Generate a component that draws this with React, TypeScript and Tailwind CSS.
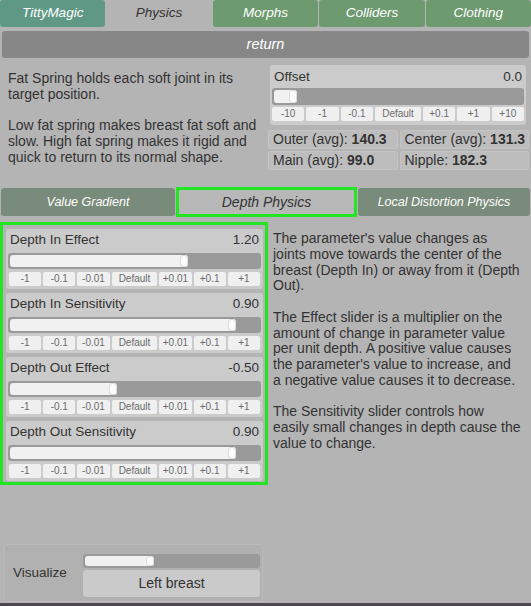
import React from "react";

const FONT = { fontFamily: '"Liberation Sans", Arial, sans-serif' };

function Slider({ pct, h = 16 }: { pct: number; h?: number }) {
  return (
    <div
      className="bg-[#9a9a9a] rounded-[3px] px-[2px] py-[2px] flex"
      style={{ height: h }}
    >
      <div className="h-full flex justify-end rounded-[3px] bg-[#f1f1f1]" style={{ width: `${pct}%` }}>
        <div className="h-full w-[8px] rounded-[3px] bg-[#fbfbfb] border border-[#dcdcdc]" />
      </div>
    </div>
  );
}

function Buttons({ labels }: { labels: string[] }) {
  return (
    <div className="flex gap-[2px] h-[14px]">
      {labels.map((l) => (
        <div
          key={l}
          className={`${l === "Default" ? "flex-[1.42]" : "flex-1"} bg-[#f0f0f0] rounded-[2px] flex items-center justify-center text-[10px] text-[#6b6b6b] leading-none`}
        >
          {l}
        </div>
      ))}
    </div>
  );
}

function DepthPanel({ label, value, pct }: { label: string; value: string; pct: number }) {
  return (
    <div className="h-[60px] bg-[#cbcbcb] rounded-[3px] px-[2px] flex flex-col">
      <div className="h-[22px] flex items-center justify-between px-[2px] text-[13.5px] text-[#333] pt-[1px]">
        <span>{label}</span>
        <span>{value}</span>
      </div>
      <div className="mt-[2px]">
        <Slider pct={pct} />
      </div>
      <div className="mt-[3px] px-[1px]">
        <Buttons labels={["-1", "-0.1", "-0.01", "Default", "+0.01", "+0.1", "+1"]} />
      </div>
    </div>
  );
}

export default function App() {
  const tabs = ["TittyMagic", "Physics", "Morphs", "Colliders", "Clothing"];
  return (
    <div className="w-[531px] h-[606px] bg-[#b4b4b4] flex flex-col overflow-hidden" style={FONT}>
      {/* top tabs */}
      <div className="flex gap-[1px] h-[27px]">
        {tabs.map((t, i) => (
          <div
            key={t}
            className={`flex-1 rounded-[3px] flex items-center justify-center italic text-[13.5px] ${
              i === 1
                ? "bg-[#b4b4b4] text-[#333]"
                : i === 0
                ? "bg-[#5f9985] text-white"
                : "bg-[#6e9a70] text-white"
            }`}
          >
            {t}
          </div>
        ))}
      </div>
      {/* return bar */}
      <div className="mt-[4px] mx-[2px] h-[27px] rounded-[3px] bg-[#878787] flex items-center justify-center italic text-white text-[14.5px]">
        return
      </div>

      {/* top section */}
      <div className="flex mt-[7px]">
        <div className="w-[262px] pl-[8px] pt-[6px] text-[14px] leading-[15.75px] text-[#333]">
          <div className="w-[256px]">
            <p>Fat Spring holds each soft joint in its target position.</p>
            <p className="mt-[15.75px]">
              Low fat spring makes breast fat soft and slow. High fat spring makes it rigid and quick to return to its
              normal shape.
            </p>
          </div>
        </div>
        <div className="flex flex-col w-[261px] ml-[6px]">
          <div className="ml-[2px] mr-[3px] h-[60px] bg-[#cbcbcb] rounded-[3px] px-[2px] flex flex-col">
            <div className="h-[23px] flex items-center justify-between px-[2px] text-[13.5px] text-[#333] pt-[1px]">
              <span>Offset</span>
              <span>0.0</span>
            </div>
            <Slider pct={9.3} h={17} />
            <div className="mt-[2px]">
              <Buttons labels={["-10", "-1", "-0.1", "Default", "+0.1", "+1", "+10"]} />
            </div>
          </div>
          <div className="mt-[5px] grid grid-cols-2 gap-[2px] text-[14px] text-[#333]">
            {[
              ["Outer (avg):", "140.3"],
              ["Center (avg):", "131.3"],
              ["Main (avg):", "99.0"],
              ["Nipple:", "182.3"],
            ].map(([a, b]) => (
              <div key={a} className="h-[19px] bg-[#bdbdbd] border border-[#c4c4c4] rounded-[2px] flex items-center pl-[4px] whitespace-pre">
                <span>{a} </span>
                <span className="font-bold">{b}</span>
              </div>
            ))}
          </div>
        </div>
      </div>

      {/* sub tabs */}
      <div className="flex mt-[17px] h-[30px]">
        <div className="w-[174px] ml-[1px] my-[1px] rounded-[3px] bg-[#798b7a] flex items-center justify-center italic text-white text-[12.5px]">
          Value Gradient
        </div>
        <div className="w-[181px] ml-[1px] border-[3px] border-[#22e622] bg-[#b8b8b8] flex items-center justify-center italic text-[#333] text-[14px]">
          Depth Physics
        </div>
        <div className="flex-1 ml-[1px] mr-[1px] my-[1px] rounded-[3px] bg-[#798b7a] flex items-center justify-center italic text-white text-[12.5px]">
          Local Distortion Physics
        </div>
      </div>

      {/* main */}
      <div className="flex mt-[5px]">
        <div className="w-[268px] border-[3px] border-[#22e622] pl-[3px] pr-[2px] pt-[4px] pb-[1px] flex flex-col gap-[4px]">
          <DepthPanel label="Depth In Effect" value="1.20" pct={71.4} />
          <DepthPanel label="Depth In Sensitivity" value="0.90" pct={90.7} />
          <DepthPanel label="Depth Out Effect" value="-0.50" pct={43.1} />
          <DepthPanel label="Depth Out Sensitivity" value="0.90" pct={90.7} />
        </div>
        <div className="pl-[5px] pt-[9px] text-[14px] leading-[15.75px] text-[#333]">
          <div className="w-[249px]">
            <p>
              The parameter's value changes as joints move towards the center of the breast (Depth In) or away from it
              (Depth Out).
            </p>
            <p className="mt-[15.75px]">
              The Effect slider is a multiplier on the amount of change in parameter value per unit depth. A positive
              value causes the parameter's value to increase, and a negative value causes it to decrease.
            </p>
            <p className="mt-[15.75px]">
              The Sensitivity slider controls how easily small changes in depth cause the value to change.
            </p>
          </div>
        </div>
      </div>

      <div className="flex-1" />

      {/* visualize */}
      <div className="ml-[4px] w-[259px] h-[58px] bg-[#b1b1b1] border border-[#bababa] rounded-[2px] flex mb-[1px]">
        <div className="w-[78px] flex items-center pl-[8px] text-[13.5px] text-[#333]">Visualize</div>
        <div className="flex-1 flex flex-col pt-[9px] pr-[2px]">
          <Slider pct={40} h={14} />
          <div className="mt-[2px] h-[27px] bg-[#cacaca] rounded-[3px] flex items-center justify-center text-[14px] text-[#333]">
            Left breast
          </div>
        </div>
      </div>
      <div className="h-[3px] bg-[#4c4852]" />
    </div>
  );
}
